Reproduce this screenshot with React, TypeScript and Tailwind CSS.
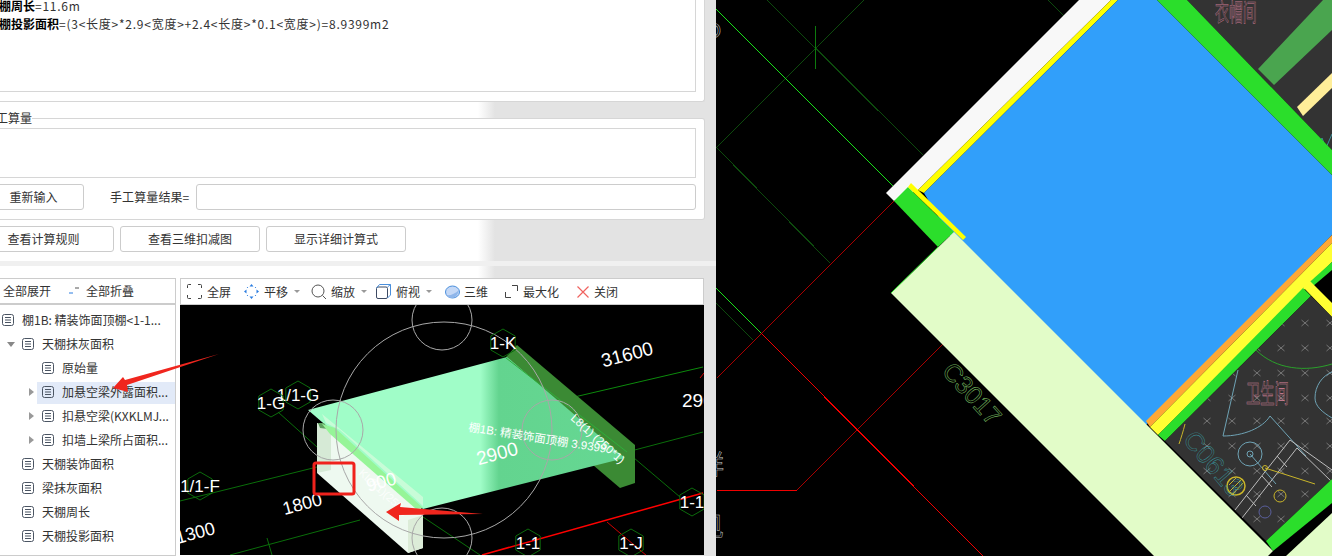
const cjk = "font-['Noto_Sans_CJK_SC','Liberation_Sans',sans-serif]";

function DocIcon() {
  return (
    <svg className="w-3 h-3 flex-shrink-0" viewBox="0 0 12 12" fill="none" stroke="#4b5563">
      <rect x="0.5" y="0.5" width="11" height="11" rx="2" />
      <path d="M3 3.500h6M3 6h6M3 8.500h6" />
    </svg>
  );
}

function TreeRow({ level, label, arrow, active }: { level: number; label: string; arrow?: "right" | "down"; active?: boolean }) {
  const pad = level === 0 ? "pl-[2px]" : level === 1 ? "pl-[22px]" : "pl-[42px]";
  return (
    <div className={`relative h-6 flex items-center ${pad}`}>
      {active && <div className="absolute left-[37px] right-0 top-[2px] bottom-0 bg-[#e2eaf8]" />}
      {arrow === "down" && <div className="absolute left-[7px] top-[10px] w-0 h-0 border-l-[4px] border-r-[4px] border-t-[5px] border-l-transparent border-r-transparent border-t-[#888]" />}
      {arrow === "right" && <div className="absolute left-[29px] top-[8px] w-0 h-0 border-t-[4px] border-b-[4px] border-l-[5px] border-t-transparent border-b-transparent border-l-[#999]" />}
      <div className="relative"><DocIcon /></div>
      <span className="relative ml-2 text-xs text-[#333] whitespace-nowrap">{label}</span>
    </div>
  );
}

function Caret() {
  return <span className="ml-[6px] w-0 h-0 border-l-[3px] border-r-[3px] border-t-[3px] border-l-transparent border-r-transparent border-t-[#999]" />;
}

function Toolbar() {
  return (
    <div className="h-[27px] bg-white border border-[#ccc] flex items-center pl-[6px] text-xs text-[#333]">
      <svg className="w-[15px] h-[15px]" viewBox="0 0 15 15" fill="none" stroke="#444" strokeWidth="1">
        <path d="M.5 4V1.500a1 1 0 0 1 1-1H4M11 .5h2.500a1 1 0 0 1 1 1V4M14.500 11v2.500a1 1 0 0 1-1 1H11M4 14.500H1.500a1 1 0 0 1-1-1V11" />
      </svg>
      <span className="ml-[5px]">全屏</span>
      <svg className="ml-[13px] w-[15px] h-[15px]" viewBox="0 0 15 15" fill="#2b7de0" stroke="none">
        <path d="M7.500 0 9.500 2.500h-4zM7.500 15l2-2.500h-4zM0 7.500 2.500 5.500v4zM15 7.500 12.500 5.500v4z" />
        <circle cx="3.500" cy="3.500" r=".6" /><circle cx="11.500" cy="3.500" r=".6" /><circle cx="3.500" cy="11.500" r=".6" /><circle cx="11.500" cy="11.500" r=".6" />
      </svg>
      <span className="ml-[5px]">平移</span>
      <Caret />
      <svg className="ml-[11px] w-[16px] h-[16px]" viewBox="0 0 16 16" fill="none" stroke="#555">
        <circle cx="7" cy="7" r="6" /><path d="m11.500 11.500 3.500 3.500" />
      </svg>
      <span className="ml-[4px]">缩放</span>
      <Caret />
      <svg className="ml-[9px] w-[15px] h-[15px]" viewBox="0 0 15 15" fill="none" stroke="#3d4a63">
        <rect x=".5" y="3" width="11" height="11.500" rx="1.500" />
        <path d="M.5 4 3.500 .5h11v10.500l-3 3M11.500 3l3-2.500" stroke="#4a8fdc" />
      </svg>
      <span className="ml-[5px]">俯视</span>
      <Caret />
      <svg className="ml-[13px] w-[15px] h-[14px]" viewBox="0 0 15 14">
        <ellipse cx="7.500" cy="7" rx="7" ry="6" fill="#c4d8f6" stroke="#4a8fdc" />
        <path d="M1 10c4 1 9-1 13-5-1 5-4 8-7 8-3 0-5-1-6-3z" fill="#8fb6ea" />
      </svg>
      <span className="ml-[4px]">三维</span>
      <svg className="ml-[17px] w-[13px] h-[13px]" viewBox="0 0 13 13" fill="none" stroke="#444">
        <path d="M.5 7v5.500H6M7 .5h5.500V6" />
      </svg>
      <span className="ml-[5px]">最大化</span>
      <svg className="ml-[18px] w-[12px] h-[12px]" viewBox="0 0 12 12" fill="none" stroke="#f0625f" strokeWidth="1.200">
        <path d="m.5.500 11 11M11.500.500l-11 11" />
      </svg>
      <span className="ml-[5px]">关闭</span>
    </div>
  );
}

function Hex({ x, y, label }: { x: number; y: number; label: string }) {
  const r = 14;
  const pts = [[0, -r], [r * 0.87, -r / 2], [r * 0.87, r / 2], [0, r], [-r * 0.87, r / 2], [-r * 0.87, -r / 2]]
    .map(([a, b]) => `${x + a},${y + b}`)
    .join(" ");
  return (
    <g>
      <polygon points={pts} fill="none" stroke="#0c6b0c" />
      <text x={x} y={y + 6} textAnchor="middle" fontSize="17" fill="#fff">{label}</text>
    </g>
  );
}

function ModelView() {
  return (
    <svg className="block w-[524px] h-[250px] bg-black font-['Liberation_Sans','Noto_Sans_CJK_SC',sans-serif]" viewBox="180 305 524 250">
      <defs>
        <linearGradient id="slab" gradientUnits="userSpaceOnUse" x1="300" y1="0" x2="640" y2="0">
          <stop offset="0.53" stopColor="#a0fdc8" />
          <stop offset="0.585" stopColor="#63d48f" />
          <stop offset="1" stopColor="#66d893" />
        </linearGradient>
      </defs>
      <g stroke="#0a6e0a" fill="none">
        <path d="M180 501 317 467M230 555 360 520M267 538l5 17M278 412l39 35M627 452l76-20M627 452l53 45M423 517l57 38" />
      </g>
      <path d="M570 398 703 367" stroke="#0c8a0c" />
      <polygon points="506,357 517,345 635,445 635,483 620,488 593,465 506,385" fill="#3b8a34" />
      <polygon points="308,410 507,357 625,458 423,509" fill="url(#slab)" />
      <path d="M506 358 627 452" stroke="#2fae3a" />
      <polygon points="317,423 330,432 423,510 423,548 408,553 317,473" fill="#eef9f0" />
      <polygon points="408,520 423,515 423,548 408,553" fill="#dcecd8" />
      <polygon points="317,423 331,430 331,470 317,473" fill="#d6ead6" />
      <polygon points="318,423 324,423 328,429 320,428" fill="#5fa060" />
      <polygon points="322,414 423,497 423,506 340,430 326,423" fill="#c8fcd8" />
      <polygon points="322,424 335,428 423,508 416,509 330,434" fill="#96f598" />
      <g stroke="#a8a8a8" fill="none">
        <circle cx="444" cy="430" r="108" />
        <circle cx="442" cy="320" r="30" />
        <circle cx="552" cy="430" r="30" />
        <circle cx="333" cy="430" r="30" />
        <circle cx="442" cy="538" r="30" />
      </g>
      <path d="M482 555 703 493" stroke="#ff0000" strokeWidth="1.500" />
      <path d="M607 522 647 556M704 373l-4 5" stroke="#d00000" />
      <Hex x={503} y={343} label="1-K" />
      <Hex x={298} y={395} label="1/1-G" />
      <Hex x={271} y={403} label="1-G" />
      <Hex x={200} y={486} label="1/1-F" />
      <Hex x={692} y={502} label="1-1" />
      <Hex x={528} y={543} label="1-1" />
      <Hex x={631} y={543} label="1-J" />
      <g fill="#fff">
        <text x="627" y="361" textAnchor="middle" fontSize="19" transform="rotate(-15 627 354)">31600</text>
        <text x="682" y="407" fontSize="19">290</text>
        <text x="497" y="460" textAnchor="middle" fontSize="19" transform="rotate(-15 497 453)">2900</text>
        <text x="302" y="510" textAnchor="middle" fontSize="18" transform="rotate(-15 302 503)">1800</text>
        <text x="195" y="539" textAnchor="middle" fontSize="18" transform="rotate(-15 195 532)">1300</text>
        <text x="381" y="488" textAnchor="middle" fontSize="18" transform="rotate(-15 381 481)">900</text>
        <text x="468" y="431" fontSize="11.500" transform="rotate(9 468 431)">棚1B: 精装饰面顶棚 3.9399</text>
        <text x="570" y="419" fontSize="11.500" transform="rotate(42 570 419)">L8(1) (250*1)</text>
        <text x="358" y="474" fontSize="11" opacity="0.8" transform="rotate(42 358 474)">KL8(1)(250*)</text>
      </g>
    </svg>
  );
}

const roomCols = [1207, 1232, 1257, 1281, 1305, 1330];
const roomRows = [323, 348, 373, 398, 421, 446, 471, 494, 519];

function CadView() {
  return (
    <svg className="flex-1 h-full block bg-black font-['Liberation_Sans','Noto_Sans_CJK_SC',sans-serif]" viewBox="716 0 616 556">
      <defs>
        <clipPath id="room"><polygon points="1165,441 1311,296 1332,317 1332,479 1266,541" /></clipPath>
      </defs>
      <g fill="none" strokeWidth="1" shapeRendering="crispEdges" transform="translate(0.5 0.5)">
        <path d="M767 0 923 155M863 0 716 147 830 263M1048 0l16 16M716 303l37 37" stroke="#0d4a0d" />
        <path d="M815 25v43" stroke="#0d7a0d" />
        <path d="M716 9 893 186M716 288l45 45" stroke="#19e019" />
        <path d="M893 201 716 378M942 344 796 490" stroke="#a80000" />
        <path d="M761 333 983 556M796 490H716" stroke="#f00000" />
      </g>
      <polygon points="1187,0 1332,0 1332,150" fill="#333" />
      <polygon points="1258,69 1323,0 1332,0 1332,30 1274,85" fill="#4aa54f" />
      <polygon points="1297,107 1332,73 1332,88 1303,116" fill="#ffee99" />
      <path d="M1316 150l6-12 4 10 6-14M1320 154l6-8 6 6" stroke="#3d8f99" fill="none" />
      <polygon points="1079,0 1111,0 918,190 894,201 886,193" fill="#f8f8f8" />
      <polygon points="1111,0 1118,0 924,193 918,190" fill="#ffff00" />
      <polygon points="1118,0 1157,0 1332,175 1332,235 1146,425 950,236 924,193" fill="#319ffa" />
      <polygon points="1157,0 1187,0 1332,150 1332,175" fill="#2bde2b" />
      <polygon points="908,187 894,201 938,247 954,232" fill="#2bde2b" />
      <polygon points="911,183 966,237 963,240 908,187" fill="#ffff00" />
      <polygon points="1146,421 1332,235 1332,243 1150,427" fill="#ffa835" />
      <polygon points="1150,427 1332,243 1332,262 1158,435" fill="#ffff33" />
      <polygon points="1158,435 1303,288 1311,296 1165,441" fill="#2bde2b" />
      <polygon points="1303,288 1332,262 1332,270 1312,287" fill="#2bde2b" />
      <polygon points="1300,284 1308,279 1332,303 1332,317" fill="#ffff33" />
      <polygon points="1165,441 1311,296 1332,317 1332,479 1266,541" fill="#333" />
      <g clipPath="url(#room)">
        {roomRows.map((y) =>
          roomCols.map((x) => (
            <path key={`${x}-${y}`} d={`M${x - 3.5} ${y - 3}l7 6M${x + 3.5} ${y - 3}l-7 6`} stroke="#777" fill="none" />
          ))
        )}
        <g fill="none">
          <path d="M1256 350c20 20 50 22 76 14" stroke="#2ba02b" />
          <path d="M1238 370 1223 436c20 0 40-8 47-20l36 40M1332 372c-10 4-17 14-17 26 0 8 7 14 17 20" stroke="#6fa3b5" />
          <circle cx="1250" cy="454" r="12" stroke="#6fa3b5" />
          <circle cx="1250" cy="454" r="3" stroke="#6fa3b5" />
          <path d="M1250 454l26 30" stroke="#6fa3b5" />
          <path d="M1235 510l55-70 42 30M1242 518l55-70 35 34M1246 495l10 11M1262 476l10 11M1277 456l10 11" stroke="#bdbdbd" />
          <circle cx="1236" cy="486" r="9" stroke="#c9b52a" strokeWidth="1.500" />
          <path d="M1230 491l12-12M1233 494l10-11M1229 485l7-7" stroke="#c9b52a" />
          <circle cx="1280" cy="496" r="6" stroke="#c9b52a" />
          <circle cx="1265" cy="468" r="2.500" stroke="#c9b52a" />
          <path d="M1265 468l50 16" stroke="#c9b52a" />
          <circle cx="1265" cy="512" r="6" stroke="#5a5f9c" />
          <path d="M1185 424c-2 8-4 14-6 20" stroke="#c9b52a" />
        </g>
        <text fontSize="26" fill="none" stroke="#d8849c" strokeWidth="0.500" className={cjk} transform="translate(1246 403) scale(0.55 1)">卫生间</text>
        <text x="1182" y="440" fontSize="26" fill="none" stroke="#3aa0a8" strokeWidth="0.400" transform="rotate(50 1182 440)">C0613</text>
      </g>
      <polygon points="1266,541 1332,479 1332,503 1273,551" fill="#2bde2b" />
      <polygon points="1286,556 1332,513 1332,556" fill="#e2fcc8" />
      <polygon points="954,232 891,293 1154,556 1268,556 1273,551" fill="#e2fcc8" />
      <path d="M938 247 891 293" stroke="#2bde2b" />
      <text fontSize="24" fill="none" stroke="#c87a92" strokeWidth="0.500" className={cjk} transform="translate(1215 21) scale(0.58 1)">衣帽间</text>
      <text x="941" y="372" fontSize="25" fill="none" stroke="#6fae5a" strokeWidth="0.600" transform="rotate(48 941 372)">C3017</text>
      <text x="704" y="38" fontSize="22" fill="none" stroke="#ddd" strokeWidth="0.500">O</text>
      <text x="698" y="474" fontSize="26" fill="none" stroke="#ccc" strokeWidth="0.500" className={cjk}>祥</text>
      <text x="698" y="536" fontSize="26" fill="none" stroke="#ccc" strokeWidth="0.500" className={cjk}>见</text>
    </svg>
  );
}

function Btn({ w, label, className = "" }: { w: string; label: string; className?: string }) {
  return (
    <button className={`${w} ${className} h-[26px] bg-white border border-[#ccc] rounded-[3px] text-xs text-[#333] flex-shrink-0`}>
      {label}
    </button>
  );
}

export default function App() {
  return (
    <div className={`relative w-[1332px] h-[556px] overflow-hidden flex ${cjk}`}>
      <div className="w-[716px] h-full flex-shrink-0 overflow-hidden bg-[linear-gradient(90deg,#fff_0,#fff_478px,#e3e3e3_495px)]">
        {/* calculation text */}
        <div className="w-[706px] h-[102px] -ml-px bg-white border-r border-b border-[#d6d6d6] rounded-br-[3px] pr-2 pb-[9px]">
          <div className="h-full border-r border-b border-[#d6d6d6] overflow-hidden text-xs leading-[18px] text-[#333]">
            <div className="-mt-[3px] -ml-[12px]">
              <div><b className="text-black">天棚周长</b><span className="tracking-[0.75px]">=11.6m</span></div>
              <div><b className="text-black">天棚投影面积</b><span className="tracking-[0.75px]">=(3&lt;长度&gt;*2.9&lt;宽度&gt;+2.4&lt;长度&gt;*0.1&lt;宽度&gt;)=8.9399m2</span></div>
            </div>
          </div>
        </div>

        {/* manual quantity */}
        <div className="relative mt-4 w-[706px] h-[102px] -ml-px bg-white border border-l-0 border-[#d6d6d6] rounded-r-[3px] pr-2 pt-[9px]">
          <div className="absolute left-0 -top-[9px] w-[33px] overflow-hidden whitespace-nowrap bg-white text-xs text-[#333] leading-4 flex justify-end">手工算量</div>
          <div className="h-[50px] border border-l-0 border-[#d6d6d6]" />
          <div className="mt-[6px] flex items-center">
            <Btn w="w-[101px]" label="重新输入" className="-ml-4" />
            <span className="ml-[26px] w-[80px] text-xs tracking-[0.1px] text-[#333] whitespace-nowrap">手工算量结果=</span>
            <div className="ml-[6px] flex-1 h-[26px] border border-[#ccc] rounded-[3px]" />
          </div>
        </div>

        <div className="mt-[6px] flex gap-[6px]">
          <Btn w="w-[141px]" label="查看计算规则" className="-ml-[27px]" />
          <Btn w="w-[140px]" label="查看三维扣减图" />
          <Btn w="w-[140px]" label="显示详细计算式" />
        </div>

        <div className="mt-[9px] h-[5px] bg-[#f0f0f0]" />

        <div className="mt-3 flex">
          <div className="w-[177px] h-[278px] flex-shrink-0 -ml-px bg-white border border-[#ccc] flex flex-col">
            <div className="h-[26px] flex items-center border-b-2 border-[#ccc] text-xs text-[#333] pl-[3px]">
              全部展开
              <svg className="ml-[18px] w-[10px] h-[8px]" viewBox="0 0 10 8" fill="none">
                <path d="M0 6h4" stroke="#2b7de0" /><path d="M6 1h4" stroke="#555" />
              </svg>
              <span className="ml-[7px]">全部折叠</span>
            </div>
            <div className="pt-[3px]">
              <TreeRow level={0} label="棚1B:  精装饰面顶棚<1-1..." />
              <TreeRow level={1} label="天棚抹灰面积" arrow="down" />
              <TreeRow level={2} label="原始量" />
              <TreeRow level={2} label="加悬空梁外露面积..." arrow="right" active />
              <TreeRow level={2} label="扣悬空梁(KXKLMJ..." arrow="right" />
              <TreeRow level={2} label="扣墙上梁所占面积..." arrow="right" />
              <TreeRow level={1} label="天棚装饰面积" />
              <TreeRow level={1} label="梁抹灰面积" />
              <TreeRow level={1} label="天棚周长" />
              <TreeRow level={1} label="天棚投影面积" />
            </div>
          </div>
          <div className="ml-[4px] w-[524px] flex-shrink-0">
            <Toolbar />
            <ModelView />
          </div>
        </div>
      </div>

      <CadView />

      {/* annotations drawn on top of the screenshot */}
      <svg className="absolute left-0 top-0 w-[716px] h-[556px] pointer-events-none" viewBox="0 0 716 556">
        <polygon points="219,354 125,380 123,377 113,388 128,392 127,385" fill="#f0261e" />
        <polygon points="483,514 400,507 401,503 386,512 399,521 399,515" fill="#f0261e" />
        <rect x="314" y="463" width="40" height="31" rx="2" fill="none" stroke="#f0221c" strokeWidth="3" />
      </svg>
    </div>
  );
}
